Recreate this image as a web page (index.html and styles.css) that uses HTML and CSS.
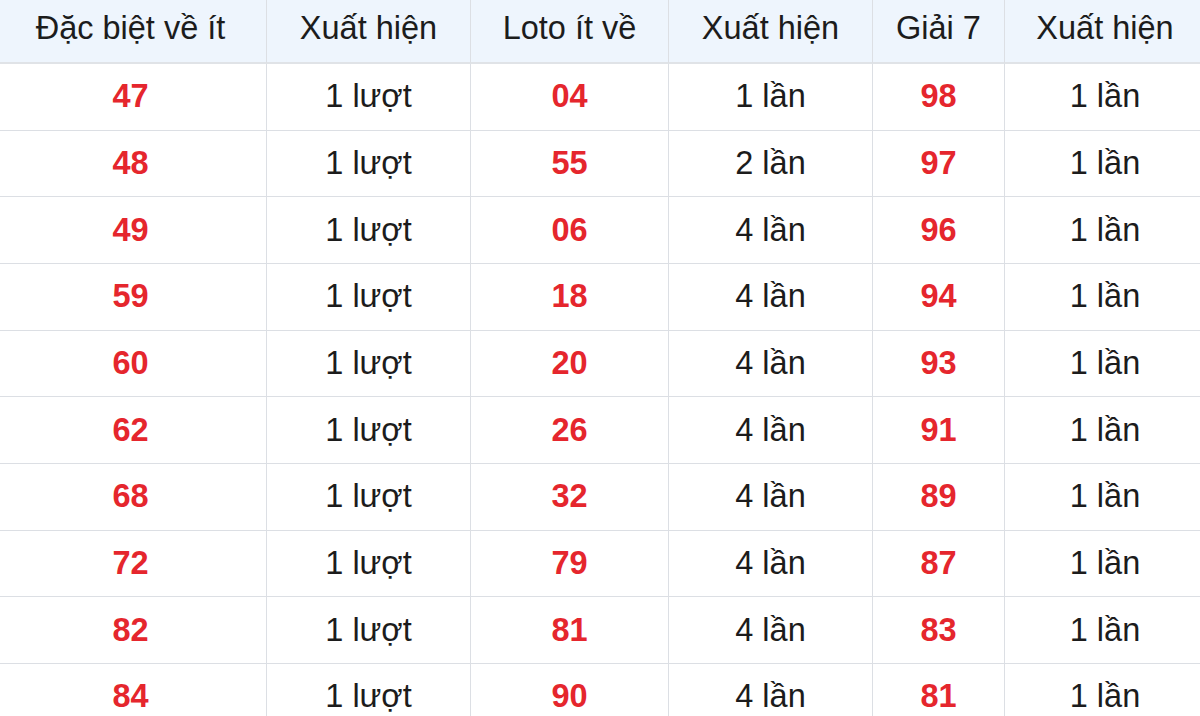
FILE: index.html
```html
<!DOCTYPE html>
<html lang="vi">
<head>
<meta charset="utf-8">
<title>Thống kê</title>
<link rel="stylesheet" href="styles.css">
</head>
<body>
<div class="wrap">
  <div class="grid">
    <div class="cell head">Đặc biệt về ít</div>
    <div class="cell head">Xuất hiện</div>
    <div class="cell head">Loto ít về</div>
    <div class="cell head">Xuất hiện</div>
    <div class="cell head">Giải 7</div>
    <div class="cell head">Xuất hiện</div>

    <div class="cell num">47</div><div class="cell">1 lượt</div><div class="cell num">04</div><div class="cell">1 lần</div><div class="cell num">98</div><div class="cell">1 lần</div>
    <div class="cell num">48</div><div class="cell">1 lượt</div><div class="cell num">55</div><div class="cell">2 lần</div><div class="cell num">97</div><div class="cell">1 lần</div>
    <div class="cell num">49</div><div class="cell">1 lượt</div><div class="cell num">06</div><div class="cell">4 lần</div><div class="cell num">96</div><div class="cell">1 lần</div>
    <div class="cell num">59</div><div class="cell">1 lượt</div><div class="cell num">18</div><div class="cell">4 lần</div><div class="cell num">94</div><div class="cell">1 lần</div>
    <div class="cell num">60</div><div class="cell">1 lượt</div><div class="cell num">20</div><div class="cell">4 lần</div><div class="cell num">93</div><div class="cell">1 lần</div>
    <div class="cell num">62</div><div class="cell">1 lượt</div><div class="cell num">26</div><div class="cell">4 lần</div><div class="cell num">91</div><div class="cell">1 lần</div>
    <div class="cell num">68</div><div class="cell">1 lượt</div><div class="cell num">32</div><div class="cell">4 lần</div><div class="cell num">89</div><div class="cell">1 lần</div>
    <div class="cell num">72</div><div class="cell">1 lượt</div><div class="cell num">79</div><div class="cell">4 lần</div><div class="cell num">87</div><div class="cell">1 lần</div>
    <div class="cell num">82</div><div class="cell">1 lượt</div><div class="cell num">81</div><div class="cell">4 lần</div><div class="cell num">83</div><div class="cell">1 lần</div>
    <div class="cell num">84</div><div class="cell">1 lượt</div><div class="cell num">90</div><div class="cell">4 lần</div><div class="cell num">81</div><div class="cell">1 lần</div>
  </div>
</div>
</body>
</html>
```
FILE: styles.css
```css
html, body {
  margin: 0;
  padding: 0;
  background: #ffffff;
}
.wrap {
  width: 1200px;
  height: 716px;
  overflow: hidden;
}
.grid {
  margin-left: -5px;
  width: 1211px;
  display: grid;
  grid-template-columns: 272px 204px 198px 204px 132px 201px;
  grid-template-rows: 64px;
  grid-auto-rows: 66.67px;
  font-family: "Liberation Sans", Arial, sans-serif;
  font-size: 32.5px;
  color: #1c1c1c;
}
.cell {
  box-sizing: border-box;
  display: flex;
  align-items: center;
  justify-content: center;
  border-right: 1px solid #dcdfe4;
  border-bottom: 1px solid #dcdfe4;
  white-space: nowrap;
}
.head {
  background: #eef5fd;
  padding-bottom: 6px;
  border-bottom: 2px solid #e0e3e7;
}
.num {
  color: #e5262d;
  font-weight: bold;
}
```
